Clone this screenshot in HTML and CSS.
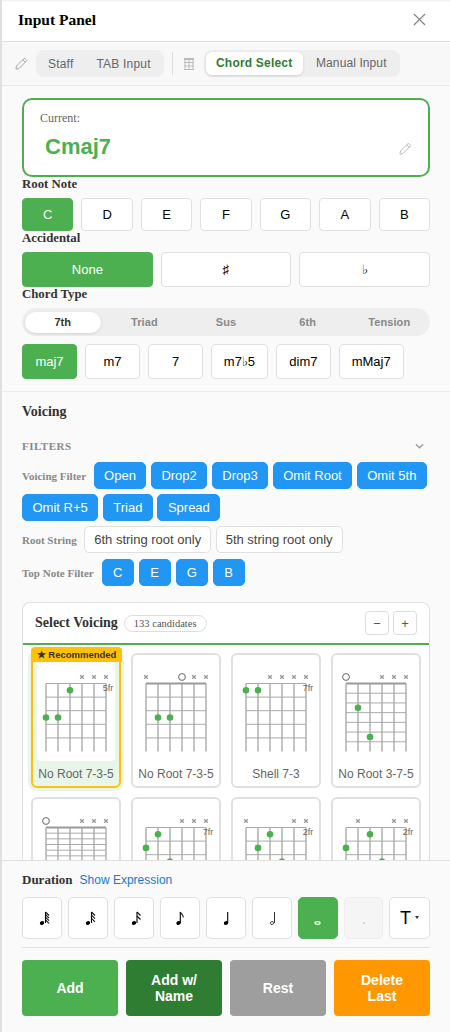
FILE: index.html
```html
<!DOCTYPE html>
<html lang="en">
<head>
<meta charset="utf-8">
<title>Input Panel</title>
<link rel="stylesheet" href="styles.css">
</head>
<body>
<div class="panel">
  <header class="head">
    <h1>Input Panel</h1>
    <svg class="close" viewBox="0 0 14 14"><path d="M1 1L13 13M13 1L1 13"/></svg>
  </header>
  <nav class="modes">
    <svg class="mode-ico" viewBox="0 0 24 24"><path d="M16.5 3.5l4 4L8 20l-5 1 1-5z M14 6l4 4"/></svg>
    <div class="seg seg-a"><span>Staff</span><span>TAB Input</span></div>
    <i class="vbar"></i>
    <svg class="mode-ico grid-ico" viewBox="0 0 12 14"><path class="g-top" d="M1 2h10"/><path d="M2 1v12M6 1v12M10 1v12M1 5.500h10M1 9h10M1 12.500h10"/></svg>
    <div class="seg seg-b"><span class="on">Chord Select</span><span>Manual Input</span></div>
  </nav>
  <main class="scroll">
    <section class="top">
      <div class="current">
        <div class="cur-label">Current:</div>
        <div class="cur-row"><b>Cmaj7</b>
          <svg class="cur-pen" viewBox="0 0 24 24"><path d="M16.5 3.5l4 4L8 20l-5 1 1-5z M14 6l4 4"/></svg>
        </div>
      </div>
      <div class="lbl">Root Note</div>
      <div class="roots"><button class="on">C</button><button>D</button><button>E</button><button>F</button><button>G</button><button>A</button><button>B</button></div>
      <div class="lbl">Accidental</div>
      <div class="accs"><button class="on">None</button><button>♯</button><button>♭</button></div>
      <div class="lbl">Chord Type</div>
      <div class="ctabs"><span class="on">7th</span><span>Triad</span><span>Sus</span><span>6th</span><span>Tension</span></div>
      <div class="ctypes"><button class="on">maj7</button><button>m7</button><button>7</button><button>m7♭5</button><button>dim7</button><button>mMaj7</button></div>
    </section>
    <section class="voicing">
      <h2>Voicing</h2>
      <div class="filters-head"><span>FILTERS</span><svg viewBox="0 0 10 6"><path d="M1 1l4 4 4-4"/></svg></div>
      <div class="frow"><span class="flbl">Voicing Filter</span><button class="chip">Open</button><button class="chip">Drop2</button><button class="chip">Drop3</button><button class="chip">Omit Root</button><button class="chip">Omit 5th</button><button class="chip">Omit R+5</button><button class="chip">Triad</button><button class="chip">Spread</button></div>
      <div class="frow"><span class="flbl">Root String</span><button class="chip off">6th string root only</button><button class="chip off">5th string root only</button></div>
      <div class="frow frow-notes"><span class="flbl">Top Note Filter</span><button class="chip note">C</button><button class="chip note">E</button><button class="chip note">G</button><button class="chip note">B</button></div>
      <div class="select">
        <div class="sel-head">
          <strong>Select Voicing</strong><span class="pill">133 candidates</span>
          <span class="zoomers"><button>−</button><button>+</button></span>
        </div>
        <div class="cards" id="cards"></div>
      </div>
    </section>
  </main>
  <footer class="foot">
    <div class="dur-head"><strong>Duration</strong><a>Show Expression</a></div>
    <div class="durs" id="durs"></div>
    <div class="actions"><button class="add">Add</button><button class="named">Add w/<br>Name</button><button class="rest">Rest</button><button class="del">Delete<br>Last</button></div>
  </footer>
</div>
<script src="app.js"></script>
</body>
</html>
```
FILE: app.js
```js
const NS = 'http://www.w3.org/2000/svg';
const VOICINGS = [
  {name:'No Root 7-3-5', rec:true, frets:5, fr:'5fr', marks:[null,null,null,'x','x','x'], dots:[[0,2.5],[1,2.5],[2,.5]]},
  {name:'No Root 7-3-5', frets:5, nut:true, marks:['x',null,null,'o','x','x'], dots:[[1,2.5],[2,2.5]]},
  {name:'Shell 7-3', frets:5, fr:'7fr', marks:[null,null,'x','x','x','x'], dots:[[0,.5],[1,.5]]},
  {name:'No Root 3-7-5', frets:7, nut:true, marks:['o',null,null,'x','x','x'], dots:[[1,2.5],[2,5.5]]},
  {name:'', frets:12, nut:true, marks:['o',null,null,'x','x','x'], dots:[]},
  {name:'', frets:5, fr:'7fr', marks:[null,null,null,'x','x','x'], dots:[[0,1.5],[1,.5],[2,2.5]]},
  {name:'', frets:5, fr:'2fr', marks:['x',null,null,null,'x','x'], dots:[[1,1.5],[2,.5],[3,2.5]]},
  {name:'', frets:5, fr:'2fr', marks:[null,'x',null,null,'x','x'], dots:[[0,1.5],[2,.5],[3,2.5]]}
];
function el(tag, attrs, parent){
  const n = document.createElementNS(NS, tag);
  for (const k in attrs) n.setAttribute(k, attrs[k]);
  parent.appendChild(n);
  return n;
}
function diagram(v){
  const s = document.createElementNS(NS,'svg');
  s.setAttribute('class','dia');
  s.setAttribute('viewBox','0 0 86 100');
  const x0 = 13, dx = 12, top = 28.5, h = 68;
  for (let i=0;i<6;i++){
    const x = x0+i*dx;
    el('line',{x1:x,x2:x,y1:top,y2:top+h,class:'str'},s);
  }
  const step = h/v.frets;
  for (let f=0;f<v.frets;f++){
    const y = top+f*step;
    el('line',{x1:x0,x2:x0+60,y1:y,y2:y,class:f===0&&v.nut?'nut':'fret'},s);
  }
  v.marks.forEach((m,i)=>{
    const x = x0+i*dx;
    if (m==='x') el('path',{d:`M${x-1.8} 20.200l3.600 3.600m0-3.600l-3.600 3.600`,class:'mx'},s);
    if (m==='o') el('circle',{cx:x,cy:22,r:3.4,class:'mo'},s);
  });
  v.dots.forEach(d=>el('circle',{cx:x0+d[0]*dx,cy:top+d[1]*step,r:3.3,class:'dot'},s));
  if (v.fr){ const t = el('text',{x:x0+62,y:35.5,class:'fr','text-anchor':'middle'},s); t.textContent = v.fr; }
  return s;
}
const cards = document.getElementById('cards');
VOICINGS.forEach(v=>{
  const c = document.createElement('div');
  c.className = 'card'+(v.rec?' rec':'');
  if (v.rec){ const b=document.createElement('div'); b.className='badge'; b.textContent='★ Recommended'; c.appendChild(b); }
  const w = document.createElement('div'); w.className='dia-wrap'; w.appendChild(diagram(v)); c.appendChild(w);
  const l = document.createElement('div'); l.className='cname'; l.textContent=v.name; c.appendChild(l);
  cards.appendChild(c);
});

function noteSvg(head, stem, flags, kind){
  const s = document.createElementNS(NS,'svg');
  s.setAttribute('class','nt');
  s.setAttribute('viewBox','0 0 40 42');
  if (kind==='whole'){ el('ellipse',{cx:head,cy:26,rx:2.500,ry:1.300,class:'nt-whole'},s); return s; }
  if (kind==='dot'){ el('circle',{cx:head,cy:26,r:1,class:'nt-dot'},s); return s; }
  if (kind==='half') el('ellipse',{cx:head,cy:26,rx:1.700,ry:1.400,class:'nt-open',transform:`rotate(-20 ${head} 26)`},s);
  else el('ellipse',{cx:head,cy:26,rx:2.200,ry:1.800,class:'nt-head',transform:`rotate(-20 ${head} 26)`},s);
  el('line',{x1:stem,x2:stem,y1:15,y2:26,class:kind==='half'?'nt-hstem':'nt-stem'},s);
  for (let i=0;i<flags;i++){
    const y = 15 + i*(flags>3?2.600:flags>2?3.200:flags>1?4:0);
    if (flags===1) el('path',{d:`M${stem} 15c.6 2 3 2.500 3 5.500`,class:'nt-flag'},s);
    else el('path',{d:`M${stem} ${y}l3.500 3.500`,class:'nt-flag'},s);
  }
  return s;
}
const durs = document.getElementById('durs');
[
  {h:20,s:23.5,f:4,t:'64th note'},{h:20,s:23.5,f:3,t:'32nd note'},{h:20,s:23,f:2,t:'16th note'},
  {h:18.5,s:20.3,f:1,t:'Eighth note'},{h:20,s:21.700,f:0,t:'Quarter note'},{h:20,s:22.500,f:0,k:'half',t:'Half note'},
  {h:19.5,f:0,k:'whole',t:'Whole note',on:true},{h:20,f:0,k:'dot',t:'Dotted',dis:true},{text:'T'}
].forEach(d=>{
  const b = document.createElement('button');
  b.className = 'dur'+(d.on?' on':'')+(d.dis?' dis':'')+(d.text?' txt':'');
  if (d.text){
    b.textContent = d.text;
    const a=document.createElement('span'); a.className='caret'; b.appendChild(a);
  } else {
    b.title = d.t;
    b.appendChild(noteSvg(d.h,d.s,d.f,d.k));
  }
  durs.appendChild(b);
});
```
FILE: styles.css
```css
* { box-sizing: border-box; }
html, body { margin: 0; height: 100%; overflow: hidden; background: #fff; }
body { font-family: "Liberation Serif", serif; color: #222; }
button { font-family: "Liberation Sans", sans-serif; cursor: pointer; padding: 0; }

.panel { height: 1032px; margin-left: 2px; box-shadow: -2px 0 0 #e0e0e0; background: #fafafa; display: flex; flex-direction: column; overflow: hidden; }

.head { flex: none; height: 42px; background: #fff; border-bottom: 1px solid #e0e0e0; box-shadow: inset 0 2px 2px -1px #eee; display: flex; align-items: center; justify-content: space-between; padding: 0 24px 2px 16px; }
.head h1 { margin: 0; font-size: 15.500px; font-weight: 700; color: #000; }
.close { width: 13px; height: 13px; fill: none; stroke: #888; stroke-width: 1.400; }

.modes { flex: none; height: 44px; background: #f8f8f8; border-bottom: 1px solid #e8e8e8; display: flex; align-items: center; padding-left: 12px; }
.mode-ico { width: 15px; height: 15px; fill: none; stroke: #aaa; stroke-width: 1.600; margin-right: 7px; }
.grid-ico { width: 12px; height: 14px; margin: 0 9px 0 10px; stroke: #bbb; stroke-width: 1; }
.g-top { stroke-width: 2; }
.seg { height: 27px; border-radius: 8px; background: #eee; display: flex; align-items: center; padding: 0 2px; font: 12px "Liberation Sans", sans-serif; color: #666; white-space: nowrap; }
.seg-a { width: 128px; padding-left: 12px; gap: 23px; letter-spacing: .2px; }
.seg-b { width: 196px; }
.seg-b span { padding: 0 10px; height: 23px; line-height: 23px; }
.seg-b span:last-child { padding-left: 13px; letter-spacing: .1px; }
.seg-b span.on { background: #fff; color: #2e7d32; font-weight: 700; border-radius: 6px; box-shadow: 0 1px 3px rgba(0,0,0,.12); width: 97px; letter-spacing: .2px; }
.vbar { width: 1px; height: 23px; background: #ddd; margin-left: 8px; }

.scroll { flex: 1; min-height: 0; overflow: hidden; }
.top { padding: 12px 20px; border-bottom: 1px solid #eee; }
.current { height: 79px; background: #fff; border: 2px solid #4caf50; border-radius: 10px; padding: 11px 16px 0; }
.cur-label { font-size: 12px; color: #666; line-height: 14px; }
.cur-row { display: flex; justify-content: space-between; align-items: center; margin-top: 8px; padding-left: 5px; }
.cur-row b { font: 700 22px/28px "Liberation Sans", sans-serif; color: #4caf50; }
.cur-pen { width: 15px; height: 15px; fill: none; stroke: #bbb; stroke-width: 1.600; margin: 2px -1px 0 0; }

.lbl { font-size: 12.800px; font-weight: 700; color: #333; line-height: 14px; height: 21px; }
.roots { display: grid; grid-template-columns: repeat(7, 1fr); gap: 8px; }
.roots button, .accs button, .ctypes button { background: #fff; border: 1px solid #e0e0e0; border-radius: 4px; color: #000; font-size: 13px; }
.top button.on { background: #4caf50; border-color: #4caf50; color: #fff; }
.roots button { height: 33px; }
.accs { display: grid; grid-template-columns: repeat(3, 1fr); gap: 8px; }
.accs button { height: 35px; }
.ctabs { height: 28px; border-radius: 14px; background: #eee; display: grid; grid-template-columns: repeat(5, 1fr); gap: 6px; align-items: center; padding: 0 3px; font: 700 11px "Liberation Sans", sans-serif; color: #888; margin-bottom: 8px; }
.ctabs span { text-align: center; letter-spacing: .1px; }
.ctabs span.on { height: 21px; line-height: 21px; background: #fff; color: #333; border-radius: 11px; box-shadow: 0 1px 3px rgba(0,0,0,.12); }
.ctypes { display: flex; gap: 8px; }
.ctypes button { height: 35px; min-width: 55px; padding: 0 11.800px; }

.voicing { padding: 12px 20px 0; }
.voicing h2 { margin: 0; font-size: 14px; font-weight: 700; color: #333; line-height: 16px; }
.filters-head { display: flex; justify-content: space-between; align-items: center; margin-top: 19px; height: 14px; font-size: 11px; font-weight: 700; color: #888; letter-spacing: .5px; padding-right: 6px; }
.filters-head svg { width: 9px; height: 6px; fill: none; stroke: #999; stroke-width: 1.400; }
.frow { display: flex; flex-wrap: wrap; align-items: center; gap: 5px 4.500px; margin-top: 5px; }
.filters-head + .frow { margin-top: 9px; }
.frow-notes { margin-top: 6px; column-gap: 5px; }
.flbl { font-size: 11px; font-weight: 700; color: #888; margin-right: 3px; }
.chip { height: 27px; padding: 0 9.500px; border-radius: 5px; border: 1px solid #2196f3; background: #2196f3; color: #fff; font-size: 13px; }
.chip.off { background: #fff; border-color: #e0e0e0; color: #444; padding: 0 9px; }
.chip.note { width: 32px; padding: 0; }

.select { margin-top: 16px; background: #fff; border: 1px solid #e0e0e0; border-bottom: 0; border-radius: 8px 8px 0 0; }
.sel-head { height: 42px; display: flex; align-items: center; padding: 0 12px; border-bottom: 2px solid #4caf50; }
.sel-head strong { font-size: 14px; color: #333; }
.pill { margin-left: 6px; height: 17px; line-height: 15px; border: 1px solid #ddd; border-radius: 9px; padding: 0 9px; font-size: 10.500px; color: #555; }
.zoomers { margin-left: auto; display: flex; gap: 4px; }
.zoomers button { width: 24px; height: 24px; background: #fff; border: 1px solid #ddd; border-radius: 4px; color: #555; font-size: 13px; }
.cards { display: grid; grid-template-columns: repeat(4, 90px); gap: 9px 10px; padding: 8px 8px 0; }
.card { position: relative; height: 135px; background: #fff; border: 2px solid #e0e0e0; border-radius: 6px; text-align: center; }
.dia-wrap { height: 111px; display: flow-root; }
.dia { width: 86px; height: 100px; display: block; overflow: visible; }
.cname { font: 12px/16px "Liberation Sans", sans-serif; color: #666; }
.card.rec { background: #e8f5e9; border-color: #ffc107; box-shadow: 0 0 0 3px #e8f5e9; }
.rec .dia-wrap { background: #fff; height: 100px; margin: 6px 4px 5px; border-radius: 4px; }
.rec .dia { margin: -6px 0 0 -4px; }
.badge { position: absolute; left: -2px; top: -8px; width: 91px; height: 15px; background: #ffc107; color: #333; border-radius: 4px 4px 0 0; font: 700 9.500px/15px "Liberation Sans", sans-serif; z-index: 1; }
.str { stroke: #c4c4c4; stroke-width: 2; }
.fret { stroke: #aaa; stroke-width: 1; }
.nut { stroke: #999; stroke-width: 2.200; }
.mx { stroke: #999; stroke-width: 1.300; fill: none; }
.mo { fill: none; stroke: #666; stroke-width: 1; }
.dot { fill: #4caf50; }
.fr { font: 9px "Liberation Sans", sans-serif; fill: #666; }

.foot { flex: none; height: 172px; background: #fafafa; border-top: 1px solid #e0e0e0; padding: 12px 20px 0; }
.dur-head { display: flex; align-items: center; gap: 7px; height: 14px; margin-bottom: 10px; }
.dur-head strong { font-size: 13px; color: #333; }
.dur-head a { font: 12px "Liberation Sans", sans-serif; color: #1976d2; }
.durs { display: flex; gap: 6px; height: 42px; }
.dur { flex: none; width: 40px; height: 42px; background: #fff; border: 1px solid #e0e0e0; border-radius: 5px; color: #000; }
.nt { display: block; width: 40px; height: 42px; margin: -1px; }
.nt-head { fill: #000; }
.nt-open { fill: #fff; stroke: #222; stroke-width: .9; }
.nt-stem { stroke: #000; stroke-width: 1.100; }
.nt-hstem { stroke: #333; stroke-width: 1; }
.nt-flag { stroke: #111; stroke-width: 1.100; fill: none; }
.nt-whole { fill: none; stroke: #fff; stroke-width: 1.300; }
.nt-dot { fill: #ccc; }
.dur.on { background: #4caf50; border-color: #4caf50; }
.dur.dis { width: 39px; background: #f5f5f5; border-color: #eee; }
.dur.txt { font-size: 18px; width: 41px; }
.caret { display: inline-block; margin-left: 4px; vertical-align: 5px; border: 2px solid transparent; border-top: 3px solid #333; border-bottom: 0; }
.actions { border-top: 1px solid #e0e0e0; margin-top: 8px; padding-top: 12px; display: grid; grid-template-columns: repeat(4, 1fr); gap: 8px; }
.actions button { height: 56px; border: 0; border-radius: 4px; color: #fff; font-size: 14px; font-weight: 700; line-height: 16px; }
.add { background: #4caf50; }
.named { background: #2e7d32; }
.rest { background: #9e9e9e; }
.del { background: #ff9800; }
```
